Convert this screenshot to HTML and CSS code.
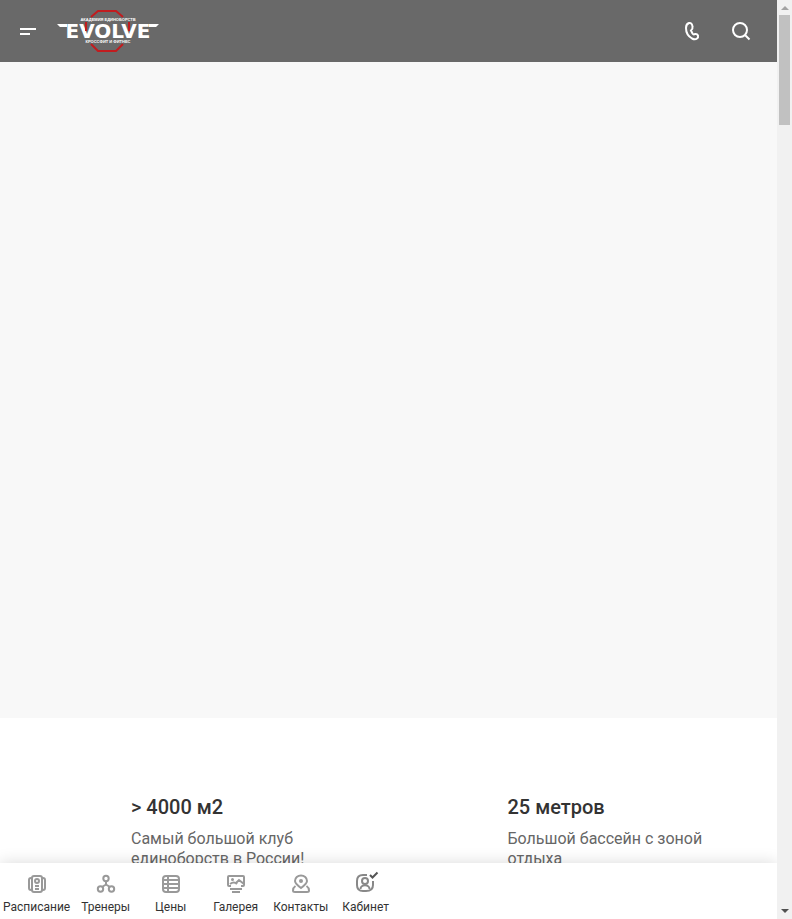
FILE: index.html
```html
<!DOCTYPE html>
<html lang="ru">
<head>
  <meta charset="UTF-8">
  <meta name="viewport" content="width=device-width, initial-scale=1.0">
  <title>EVOLVE</title>
  <link rel="stylesheet" href="styles.css">
</head>
<body>
  <div class="page">
    <!-- Header -->
    <header class="header">
      <button class="icon-btn" type="button" aria-label="Меню">
        <svg width="16" height="16" viewBox="0 0 16 16"><path d="M0 6h16M0 11h10"/></svg>
      </button>
      <a class="logo" href="#" aria-label="EVOLVE">
        <svg width="104" height="44" viewBox="0 0 104 44">
          <path class="logo-red" d="M35 8l7-6h18l7 6M35 35l7 7h18l7-7"/>
          <path class="logo-wing" d="M1 15h10v3H4zM103 15H93v3h7z"/>
          <text class="logo-name" x="52" y="29">EVOLVE</text>
          <path class="logo-red" d="M30 13v9M73 13v9"/>
          <text class="logo-small" x="52" y="12">АКАДЕМИЯ ЕДИНОБОРСТВ</text>
          <text class="logo-small" x="52" y="34">КРОССФИТ И ФИТНЕС</text>
        </svg>
      </a>
      <div class="header-actions">
        <button class="icon-btn" type="button" aria-label="Позвонить">
          <svg width="18" height="20" viewBox="0 0 18 20"><path d="M6 2Q3 3 3 7Q3 14 9 17.500Q12 19 14 17.500Q15.500 16.500 15 14.500Q14 12.500 12 13Q10.500 14 9.500 12.500L8 9.500Q10 8 9.500 5.500Q9 1.500 6 2Z"/></svg>
        </button>
        <button class="icon-btn" type="button" aria-label="Поиск">
          <svg width="20" height="20" viewBox="0 0 20 20"><circle cx="9" cy="9" r="7"/><path d="M14 14l4.500 4.500"/></svg>
        </button>
      </div>
    </header>

    <main>
      <div class="banner"></div>
      <section class="features">
        <div class="feature">
          <h2>&gt; 4000 м2</h2>
          <p>Самый большой клуб единоборств в России!</p>
        </div>
        <div class="feature">
          <h2>25 метров</h2>
          <p>Большой бассейн с зоной отдыха</p>
        </div>
      </section>
    </main>

    <!-- Bottom menu -->
    <nav class="bottom-nav">
      <a href="#">
        <svg width="20" height="20" viewBox="0 0 20 20"><rect x="5" y="2" width="10" height="16" rx="2"/><path d="M5 4H4Q2 4 2 6v8q0 2 2 2h1M15 4h1q2 0 2 2v8q0 2-2 2h-1M8 12h4M8 15h4"/><circle cx="10" cy="7" r="2"/></svg>
        <span>Расписание</span>
      </a>
      <a href="#">
        <svg width="20" height="20" viewBox="0 0 20 20"><circle cx="10" cy="4.500" r="2.700"/><circle cx="4.500" cy="15" r="2.700"/><circle cx="15.500" cy="15" r="2.700"/><path d="M10 7v3.500L6 13M10 10.500l4 2.500"/></svg>
        <span>Тренеры</span>
      </a>
      <a href="#">
        <svg width="20" height="20" viewBox="0 0 20 20"><rect x="2" y="2" width="16" height="16" rx="3"/><path d="M2 6h16M2 10h16M2 14h16M7 2v16"/></svg>
        <span>Цены</span>
      </a>
      <a href="#">
        <svg width="20" height="20" viewBox="0 0 20 20"><path d="M5 12H3q-1 0-1-1V3q0-1 1-1h14q1 0 1 1v8q0 1-1 1h-2M10 9l3-3 5 4M4 15h12M6 18h8"/><path d="M4 10q4-3 7 0"/><circle class="dot" cx="6.500" cy="5.500" r="1.500"/></svg>
        <span>Галерея</span>
      </a>
      <a href="#">
        <svg width="20" height="20" viewBox="0 0 20 20"><path d="M10 14C6 11 4 9.500 4 7a6 5.500 0 0 1 12 0c0 2.500-2 4-6 7zM4.500 12c-1.500 1-2.500 3-2.500 4.500Q2 18 4 18h12q2 0 2-1.500c0-1.500-1-3.500-2.500-4.500"/><circle class="dot" cx="10" cy="7" r="2"/></svg>
        <span>Контакты</span>
      </a>
      <a href="#">
        <svg class="cabinet" width="24" height="22" viewBox="0 0 24 22"><path d="M13 3H9Q3 3 3 9v4q0 6 6 6h3q7 0 7-6V9"/><circle cx="11" cy="9" r="3"/><path d="M6.500 17c0-5 9-5 9 0"/><path class="check" d="M16 3l2.500 2.500L23.500 .500"/></svg>
        <span>Кабинет</span>
      </a>
    </nav>
  </div>

  <div class="scrollbar" aria-hidden="true">
    <span class="arrow-up"></span>
    <span class="thumb"></span>
    <span class="arrow-down"></span>
  </div>
</body>
</html>
```

FILE: styles.css
```css
* {
  box-sizing: border-box;
}

body {
  display: flex;
  height: 100vh;
  margin: 0;
  overflow: hidden;
  font-family: Roboto, sans-serif;
  color: #333;
  background-color: #fff;
}

a {
  color: inherit;
  text-decoration: none;
}

svg {
  display: block;
  overflow: visible;
  fill: none;
  stroke: currentColor;
  stroke-width: 2;
}

.page {
  display: flex;
  flex-direction: column;
  flex: 1;
  min-width: 0;
}

/* Header */
.header {
  display: flex;
  flex-shrink: 0;
  align-items: center;
  height: 62px;
  padding: 0 26px 0 20px;
  color: #fff;
  background-color: #696969;
}

.icon-btn {
  padding: 0;
  border: none;
  background: none;
  color: inherit;
  cursor: pointer;
}

.logo {
  margin-left: 20px;
}

.logo text {
  fill: #fff;
  stroke: none;
  text-anchor: middle;
  font-weight: bold;
}

.logo-name {
  font-family: "DejaVu Sans", sans-serif;
  font-size: 20px;
}

.logo-small {
  font-family: "Liberation Sans", sans-serif;
  font-size: 4px;
}

.logo-red {
  stroke: #c11c1f;
}

.logo-wing {
  fill: #fff;
  stroke: none;
}

.header-actions {
  display: flex;
  gap: 30px;
  margin-left: auto;
}

/* Content */
main {
  flex: 1;
  min-height: 0;
  overflow: hidden;
}

.banner {
  height: 656px;
  background-color: #f8f8f8;
}

.features {
  display: grid;
  grid-template-columns: 1fr 1fr;
  padding: 76px 12px;
}

.feature {
  padding: 0 32px 0 119px;
}

.feature h2 {
  margin: 0 0 9px;
  font-size: 20px;
  line-height: 26px;
  font-weight: 500;
}

.feature p {
  margin: 0;
  font-size: 16px;
  line-height: 20px;
  color: #666;
}

/* Bottom menu */
.bottom-nav {
  display: flex;
  flex-shrink: 0;
  height: 56px;
  background-color: #fff;
  box-shadow: 0 0 15px rgba(0, 0, 0, 0.15);
  clip-path: inset(-20px 0 0 0);
}

.bottom-nav a {
  display: flex;
  flex-direction: column;
  align-items: center;
  justify-content: flex-end;
  gap: 5px;
  min-width: 65px;
  padding: 0 3px 4px;
  font-size: 12px;
  line-height: 16px;
}

.bottom-nav svg {
  color: #999;
}

.bottom-nav .cabinet {
  color: #888;
}

.bottom-nav .check {
  stroke: #555;
}

.dot {
  fill: currentColor;
  stroke: none;
}

/* Scrollbar */
.scrollbar {
  display: flex;
  flex-direction: column;
  align-items: center;
  width: 15px;
  padding: 6px 0;
  background-color: #f1f1f1;
}

.arrow-up,
.arrow-down {
  border: 4px solid transparent;
}

.arrow-up {
  border-top: none;
  border-bottom-color: #a3a3a3;
}

.thumb {
  width: 11px;
  height: 110px;
  margin-top: 5px;
  background-color: #c1c1c1;
}

.arrow-down {
  margin-top: auto;
  border-bottom: none;
  border-top-color: #505050;
}
```
